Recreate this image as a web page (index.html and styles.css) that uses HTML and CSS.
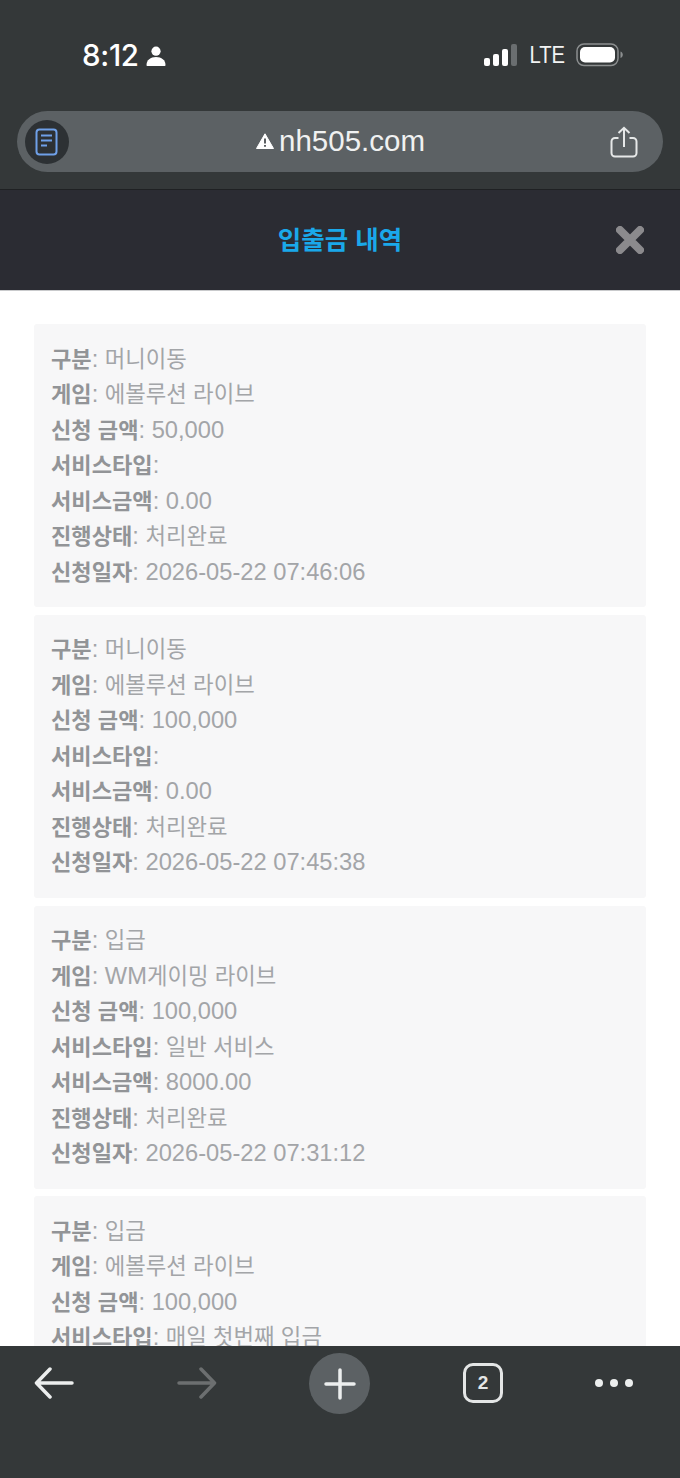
FILE: index.html
```html
<!DOCTYPE html>
<html lang="ko">
<head>
<meta charset="utf-8">
<title>입출금 내역</title>
<link rel="stylesheet" href="styles.css">
</head>
<body>
<div class="screen">
  <header class="chrome">
    <div class="status">
      <div class="status-left">
        <span class="time">8:12</span>
        <svg class="person" viewBox="0 0 20 20" width="20" height="20"><circle cx="10" cy="5.2" r="4.6" fill="#fff"/><path d="M.5 19c0-5 4-8 9.500-8s9.500 3 9.500 8c0 .6-.4 1-1 1H1.500c-.6 0-1-.4-1-1z" fill="#fff"/></svg>
      </div>
      <div class="status-right">
        <svg class="signal" viewBox="0 0 34 22" width="34" height="22"><rect x="0" y="14" width="6" height="8" rx="2" fill="#fff"/><rect x="9" y="10" width="6" height="12" rx="2" fill="#fff"/><rect x="18" y="5" width="6" height="17" rx="2" fill="#fff"/><rect x="27" y="0" width="6" height="22" rx="2" fill="#6a6e70"/></svg>
        <span class="lte">LTE</span>
        <svg class="battery" viewBox="0 0 48 24" width="48" height="24"><rect x="1" y="1" width="41" height="21.500" rx="7" fill="none" stroke="#8c8f90" stroke-width="1.500"/><rect x="4" y="4" width="35" height="15.500" rx="5" fill="#fff"/><path d="M44.500 8.500c1.500.5 2.300 1.700 2.300 3.200s-.8 2.700-2.300 3.200z" fill="#8c8f90"/></svg>
      </div>
    </div>
    <div class="urlbar">
      <span class="reader">
        <svg viewBox="0 0 24 28" width="24" height="28"><rect x="1.500" y="1.500" width="20" height="25" rx="3" fill="none" stroke="#6fa0e8" stroke-width="2"/><path d="M6 7.500h11M6 12.500h11M6 17.500h6" stroke="#6fa0e8" stroke-width="1.800" fill="none"/></svg>
      </span>
      <span class="domain">
        <svg class="warn" viewBox="0 0 18 16" width="18" height="16"><path d="M9 .8 17.500 15.500H.5z" fill="#fff" stroke="#fff" stroke-linejoin="round"/><path d="M9 5.500v5M9 12v1.800" stroke="#5b5f62" stroke-width="2" fill="none"/></svg>
        <span>nh505.com</span>
      </span>
      <svg class="share" viewBox="0 0 28 32" width="28" height="32"><path d="M8.500 12H5a3.500 3.500 0 0 0-3.500 3.500V27A3.500 3.500 0 0 0 5 30.500h18a3.500 3.500 0 0 0 3.500-3.500V15.500A3.500 3.500 0 0 0 23 12h-3.500M14 21V2M8.500 7 14 1.800 19.500 7" fill="none" stroke="#e6e8e8" stroke-width="2"/></svg>
    </div>
  </header>

  <div class="titlebar">
    <h1 class="title">입출금 내역</h1>
    <svg class="close" viewBox="0 0 28 28" width="28" height="28"><path d="M4 4 24 24M24 4 4 24" stroke="#8b8a8d" stroke-width="8" stroke-linecap="round"/></svg>
  </div>

  <main class="content">
    <section class="card">
      <p class="row"><b>구분</b><span>: <em>머니이동</em></span></p>
      <p class="row"><b>게임</b><span>: <em>에볼루션 라이브</em></span></p>
      <p class="row"><b>신청 금액</b><span>: 50,000</span></p>
      <p class="row"><b>서비스타입</b><span>: </span></p>
      <p class="row"><b>서비스금액</b><span>: 0.00</span></p>
      <p class="row"><b>진행상태</b><span>: <em>처리완료</em></span></p>
      <p class="row"><b>신청일자</b><span>: 2026-05-22 07:46:06</span></p>
    </section>
    <section class="card">
      <p class="row"><b>구분</b><span>: <em>머니이동</em></span></p>
      <p class="row"><b>게임</b><span>: <em>에볼루션 라이브</em></span></p>
      <p class="row"><b>신청 금액</b><span>: 100,000</span></p>
      <p class="row"><b>서비스타입</b><span>: </span></p>
      <p class="row"><b>서비스금액</b><span>: 0.00</span></p>
      <p class="row"><b>진행상태</b><span>: <em>처리완료</em></span></p>
      <p class="row"><b>신청일자</b><span>: 2026-05-22 07:45:38</span></p>
    </section>
    <section class="card">
      <p class="row"><b>구분</b><span>: <em>입금</em></span></p>
      <p class="row"><b>게임</b><span>: WM<em>게이밍 라이브</em></span></p>
      <p class="row"><b>신청 금액</b><span>: 100,000</span></p>
      <p class="row"><b>서비스타입</b><span>: <em>일반 서비스</em></span></p>
      <p class="row"><b>서비스금액</b><span>: 8000.00</span></p>
      <p class="row"><b>진행상태</b><span>: <em>처리완료</em></span></p>
      <p class="row"><b>신청일자</b><span>: 2026-05-22 07:31:12</span></p>
    </section>
    <section class="card">
      <p class="row"><b>구분</b><span>: <em>입금</em></span></p>
      <p class="row"><b>게임</b><span>: <em>에볼루션 라이브</em></span></p>
      <p class="row"><b>신청 금액</b><span>: 100,000</span></p>
      <p class="row"><b>서비스타입</b><span>: <em>매일 첫번째 입금</em></span></p>
    </section>
  </main>

  <footer class="toolbar">
    <svg class="tool" viewBox="0 0 40 32" width="40" height="32"><path d="M38 16H3M16 2 2.500 16 16 30" fill="none" stroke="#eceeee" stroke-width="3.500" stroke-linecap="round" stroke-linejoin="round"/></svg>
    <svg class="tool" viewBox="0 0 40 32" width="40" height="32"><path d="M2 16h35M24 2l13.500 14L24 30" fill="none" stroke="#6c6f70" stroke-width="3.500" stroke-linecap="round" stroke-linejoin="round"/></svg>
    <span class="plus"><svg viewBox="0 0 32 32" width="32" height="32"><path d="M16 2v28M2 16h28" stroke="#eceeee" stroke-width="3.500" stroke-linecap="round"/></svg></span>
    <span class="tabs">2</span>
    <span class="more"><i></i><i></i><i></i></span>
  </footer>
</div>
</body>
</html>
```
FILE: styles.css
```css
* { box-sizing: border-box; }
html, body { margin: 0; padding: 0; }
body { background: #fff; font-family: "Liberation Sans", "Noto Sans CJK KR", sans-serif; }
.screen { width: 680px; height: 1478px; display: flex; flex-direction: column; overflow: hidden; }

.chrome { height: 190px; flex: none; background: #343839; border-bottom: 1px solid #1f2123; padding: 0 17px; display: flex; flex-direction: column; }
.status { height: 111px; flex: none; display: flex; justify-content: space-between; padding: 39px 39px 0 65px; }
.status-left, .status-right { display: flex; align-items: center; height: 32px; }
.status-left { gap: 7px; }
.time { color: #fff; font: 500 29.500px/32px Inter, "Liberation Sans", sans-serif; letter-spacing: -.3px; }
.person { margin-top: 1px; }
.status-right { gap: 11px; }
.lte { color: #f2f3f3; font: 400 23px/32px "Liberation Sans", sans-serif; transform: scaleX(.88); margin: 0 -2px; }
.urlbar { height: 61px; flex: none; width: 646px; border-radius: 31px; background: #5c6164; display: flex; align-items: center; justify-content: space-between; padding: 0 25px 0 8px; position: relative; }
.reader { width: 44px; height: 44px; border-radius: 50%; background: #2d3134; display: flex; align-items: center; justify-content: center; }
.domain { position: absolute; left: 239px; top: 13px; display: flex; align-items: center; gap: 5px; color: #f0f1f1; font: 400 29.500px/34px "Liberation Sans", sans-serif; }

.titlebar { height: 101px; flex: none; background: #2b2c33; border-bottom: 1px solid #c9cacc; display: flex; align-items: center; justify-content: center; position: relative; padding-bottom: 4px; }
.title { margin: 0; color: #1aa8ea; font: 700 25.500px/32px "Noto Sans CJK KR", sans-serif; }
.close { position: absolute; right: 36px; top: 36px; }

.content { flex: 1; min-height: 0; overflow: hidden; padding: 33px 34px 0; display: flex; flex-direction: column; gap: 7.750px; }
.card { flex: none; background: #f7f7f8; border-radius: 3px; padding: 15.500px 17px 19px; }
.row { margin: 0; height: 35.500px; font-size: 23.700px; line-height: 35.500px; color: #a3a5a8; white-space: nowrap; }
.row b { font-weight: 700; color: #929497; font-family: "Noto Sans CJK KR", sans-serif; font-size: 22.100px; }
.row span { font-family: "Liberation Sans", "Noto Sans CJK KR", sans-serif; }
.row em { font-style: normal; font-family: "Noto Sans CJK KR", sans-serif; font-size: 22.300px; }

.toolbar { height: 132px; flex: none; background: #343839; position: relative; display: flex; padding: 0; }
.tool { position: absolute; top: 21px; }
.tool:nth-child(1) { left: 34px; }
.tool:nth-child(2) { left: 177px; }
.plus { position: absolute; left: 309px; top: 7px; width: 61px; height: 61px; border-radius: 50%; background: #5c6164; display: flex; align-items: center; justify-content: center; }
.tabs { position: absolute; left: 463px; top: 17px; width: 40px; height: 40px; border: 3px solid #e4e6e6; border-radius: 10px; color: #e4e6e6; font: 700 19px/34px "Liberation Sans", sans-serif; text-align: center; }
.more { position: absolute; left: 595px; top: 33px; display: flex; gap: 7px; }
.more i { width: 8px; height: 8px; border-radius: 50%; background: #eceeee; }
```
